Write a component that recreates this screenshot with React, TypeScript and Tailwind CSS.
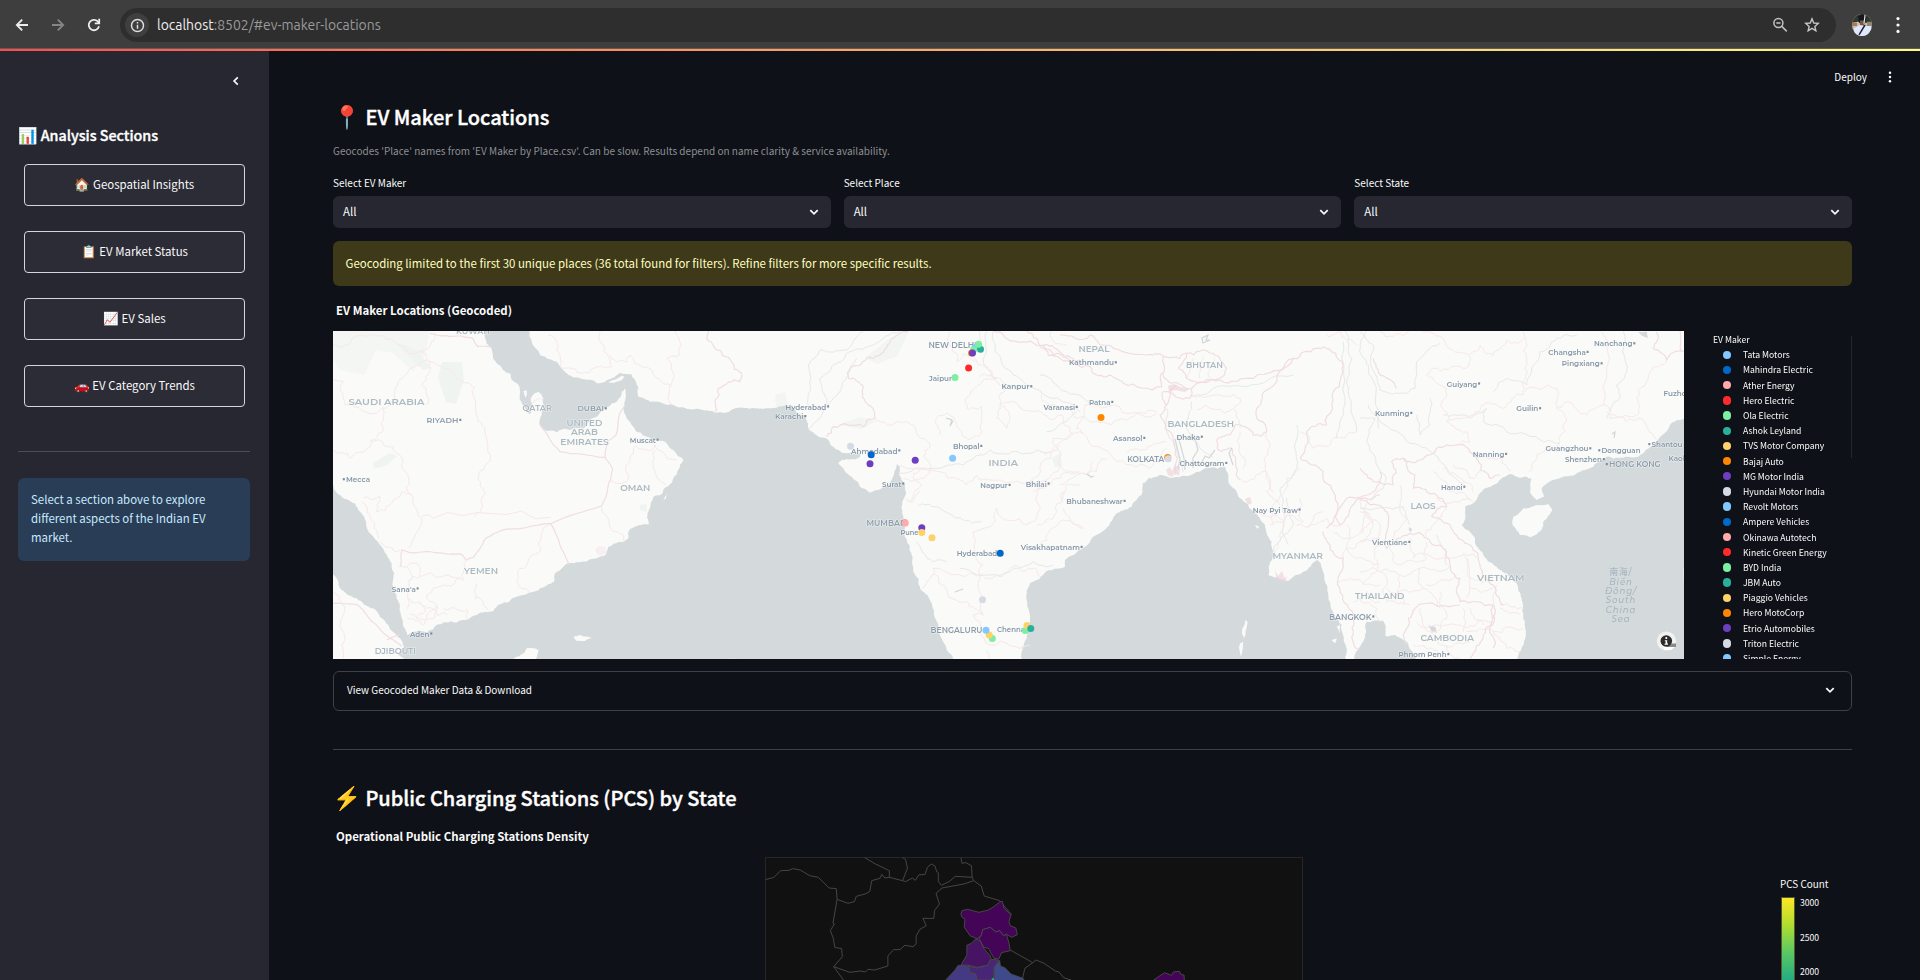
import React from "react";

type Pt = [number, number];

/* Deterministic noise so that borders look surveyed rather than ruled. */
function makeRandom(seed: number) {
  let s = seed * 9301 + 49297;
  return () => {
    s = (s * 9301 + 49297) % 233280;
    return s / 233280 - 0.5;
  };
}

function parse(points: string): Pt[] {
  const n = points.trim().split(/[\s,]+/).map(Number);
  const out: Pt[] = [];
  for (let i = 0; i + 1 < n.length; i += 2) out.push([n[i], n[i + 1]]);
  return out;
}

function rough(points: string, amp: number, seed: number, close = false) {
  const rnd = makeRandom(seed);
  let pts = parse(points);
  if (close) pts = [...pts, pts[0]];
  for (let pass = 0; pass < 3; pass++) {
    const next: Pt[] = [pts[0]];
    for (let i = 1; i < pts.length; i++) {
      const [ax, ay] = pts[i - 1];
      const [bx, by] = pts[i];
      const len = Math.hypot(bx - ax, by - ay);
      if (len > 9) {
        const k = Math.min(len, 55) * amp * rnd();
        next.push([(ax + bx) / 2 - ((by - ay) / len) * k, (ay + by) / 2 + ((bx - ax) / len) * k]);
      }
      next.push([bx, by]);
    }
    pts = next;
  }
  return "M" + pts.map(([x, y]) => `${x.toFixed(1)} ${y.toFixed(1)}`).join("L") + (close ? "Z" : "");
}

interface Sector {
  dx: number;
  water: string[];
  land: string[];
  borders: string[];
  provinces: string[];
  rivers: string[];
}

const sectors: Sector[] = [
  {
    dx: 0,
    water: [
      "0 470 9 480 40 520 75 535 95 565 110 605 130 635 150 660 170 690 185 715 193 745 190 790 205 830 215 880 232 930 290 922 320 900 345 892 415 883 440 870 490 858 510 838 560 815 605 802 640 787 672 770 675 745 700 725 740 712 800 700 828 688 835 665 880 650 895 640 900 612 930 600 957 597 955 560 970 515 990 510 1003 490 1030 460 1060 405 1030 375 1010 355 985 345 950 335 915 315 890 280 880 250 885 190 875 200 860 230 835 245 800 275 760 310 700 312 680 322 650 318 628 298 635 270 640 220 625 200 605 215 598 268 570 225 568 185 540 145 500 115 480 65 463 10 600 10 605 50 630 90 680 110 700 135 750 160 800 175 845 160 870 143 905 148 915 165 925 215 960 230 1030 240 1145 262 1145 1010 610 1010 625 975 590 970 540 1010 232 1010 205 990 222 965 210 940 175 900 130 850 80 820 35 795 0 735",
    ],
    land: ["730 935 750 930 785 938 765 948 740 948", "832 172 875 152 884 156 850 174", "580 198 590 196 588 218", "1000 525 1012 505 1008 520"],
    borders: ["300 25 395 33 428 40 443 65 480 65", "630 300 690 380 825 397 848 433 815 542 662 596 512 617 465 642 430 697 408 706 395 688 320 683 240 683 215 675 212 725", "662 596 717 718", "10 835 80 838 110 870 180 940 215 965", "825 397 832 350 858 330 865 280 885 240", "170 945 210 930"],
    provinces: ["10 60 60 55 125 30 210 60 265 80 300 110 380 160 435 187 445 290 465 320 460 435 450 480 466 505 434 575", "265 80 300 60 312 22", "10 165 40 170 45 240 150 255 195 200 240 130 300 110 275 180 290 240", "158 245 160 310 125 345 60 400 10 375", "120 345 190 365 215 420 245 510 275 580 235 670", "275 572 310 580 662 577", "662 596 635 640 630 680 570 730 565 780 598 802", "100 520 150 515 140 560 180 540 215 500 245 510", "95 530 130 590 145 640", "205 725 265 720 270 755 400 765 405 710", "230 725 232 850", "232 770 270 755", "232 820 265 830 305 850 350 870", "240 865 290 880 320 840 290 810 340 780 390 755", "440 775 435 820 475 855", "232 880 280 900 310 880 320 840", "270 830 285 860 260 880", "415 883 412 855 340 850", "815 542 882 650", "920 360 895 465 840 468", "920 365 950 375 975 360 1040 405", "975 375 970 430 1005 480", "1040 10 1048 90 1010 100 1025 240", "655 30 690 90 690 125 760 145 800 125 845 125 835 95 810 18", "840 90 890 110 900 90 980 160 1025 185", "640 225 605 235", "150 650 210 675", "10 800 45 845 40 1000"],
    rivers: [],
  },
  {
    dx: 1110,
    water: [
      "-5 255 45 264 100 252 165 250 215 250 270 245 315 270 328 315 350 330 385 345 400 365 440 385 470 388 485 378 480 395 440 402 415 412 430 430 455 455 480 485 510 503 545 490 570 475 583 440 590 418 600 425 598 450 615 480 612 520 605 545 610 590 618 640 635 690 640 740 660 790 690 825 705 880 715 920 740 975 764 1010 -5 1010",
      "968 1010 968 970 985 910 990 880 985 850 980 800 990 775 1025 762 1045 738 1095 725 1100 700 1145 678 1145 1010",
    ],
    land: [],
    borders: ["25 18 45 70 95 110 125 145 120 170 55 190 45 262", "625 20 570 50 540 90 500 100 450 130 445 160 490 185 495 230 525 280 490 305 400 305 380 335", "880 18 950 50 1030 60 1060 90 1140 125", "980 18 1020 60 1085 85 1140 105"],
    provinces: ["525 285 600 290 650 325 690 360 675 400 690 435 600 420", "690 435 640 445 665 480 625 530", "690 435 800 480 830 450 870 465 1000 460 1060 370 1120 325", "1000 470 1010 580 980 600 890 550 885 590 820 620 850 720", "690 435 670 460 610 460", "850 745 700 730 690 760 665 790", "845 720 850 870 820 870 870 960 990 960", "850 755 900 755 940 725 1000 730 1030 765", "715 330 710 280 740 265 770 300 800 340 840 330 845 245 800 250 810 210 890 160 835 120 838 18", "830 110 790 85 770 110 750 20", "840 155 900 160 900 240 890 280 920 310 925 260 900 235", "900 235 1000 260 1085 270 1115 325", "1055 20 1060 50 1100 60", "1095 500 1060 580 1010 600", "1000 500 1080 460 1140 440", "850 870 800 830 700 745", "860 975 870 1000", "1090 530 1100 480 1140 480", "960 970 970 960", "615 520 640 530 660 500"],
    rivers: ["600 20 520 60 450 80 400 120 360 160 380 220 370 260 330 310", "490 20 440 75 360 75 325 120 330 200 325 240", "880 20 885 80 940 150 1000 190 1140 260", "860 20 850 100 900 180", "655 540 700 545 790 585 845 590", "600 445 690 430 790 420 870 375 980 385 1050 380", "650 650 700 710 740 710", "780 730 860 750 930 740 1000 710 1060 720", "470 100 420 200 385 240"],
  },
  {
    dx: 2130,
    water: [
      "-5 772 20 738 75 728 75 705 130 668 180 625 225 570 275 545 305 510 308 475 325 460 360 450 385 457 430 452 480 440 510 428 555 425 565 450 570 480 600 520 640 560 675 600 695 650 700 690 685 750 740 768 790 740 830 705 850 740 860 780 865 820 880 870 905 900 912 950 915 1010 -5 1010",
      "943 1010 960 965 975 930 978 895 1000 888 1030 888 1030 1010",
    ],
    land: ["615 885 623 890 612 940 605 925", "600 955 610 950 603 995", "875 945 890 940 885 955", "645 600 658 605 652 612", "890 905 900 900 900 925"],
    borders: ["0 65 60 100 150 125 200 155 250 175 365 185 370 95 320 90 220 70 150 30 60 30", "370 145 395 175 455 190 450 220 370 200 380 240 360 270 400 350 405 450", "415 130 440 85 520 85 560 130 540 160 440 160 415 130", "370 95 420 100 440 85", "455 190 540 165 640 160 760 100", "530 350 570 330 585 300 640 330 680 320 650 250 690 190 760 100 830 70 850 65 910 120 880 200 860 300", "530 350 545 380 575 370 590 430 600 465", "860 300 800 320 780 400 850 440 880 500 900 600 960 520 1020 510", "850 620 870 660 910 700 900 790 940 870 940 920 960 980", "860 610 920 520 1000 500 1020 440", "380 240 410 180"],
    provinces: ["0 200 30 240 110 280 170 290 260 285 350 260", "130 325 110 310 135 240 220 240 350 265", "130 325 220 400 330 430 380 370", "130 325 40 340 60 400 0 470", "260 380 310 375 380 350", "60 480 170 440 200 400", "70 550 130 610 60 590 0 660", "60 420 140 450 160 410", "450 215 520 210 600 220 580 250 470 255", "580 250 600 310", "680 320 675 430 680 500 720 540", "780 320 820 370 880 340 950 320", "600 460 680 440 700 500", "690 600 740 570 790 590 780 520", "640 560 720 580 720 650", "710 650 700 700", "780 430 740 460 700 600", "910 700 960 650 1020 640", "920 600 950 700 1020 720", "930 760 1020 780", "940 830 980 800 1020 830", "890 770 930 760", "800 610 850 560", "960 520 970 620 920 640 880 620", "980 520 1000 600 960 650", "770 600 860 580 900 600", "860 30 900 20 950 60", "440 160 460 100", "480 160 490 95", "510 160 525 100", "0 380 60 360", "600 320 610 430"],
    rivers: ["455 215 520 190 620 185 760 150", "380 250 385 330 410 380 430 440", "455 230 440 310 480 370 520 400", "915 18 935 100 925 200 950 320", "980 120 960 60 980 18", "985 120 1015 310", "770 300 770 430 720 490 730 600 745 660", "20 320 110 260", "910 50 915 240 890 340", "0 150 80 200 180 240", "690 690 760 600 740 520"],
  },
  {
    dx: 3090,
    water: [
      "-18 1010 0 965 18 935 20 890 62 888 65 930 105 930 140 950 172 1010",
      "475 1010 490 960 497 915 490 870 485 820 470 775 440 745 410 725 370 690 345 655 345 640 305 600 315 545 345 530 365 500 400 480 450 447 480 458 515 460 510 500 530 525 552 515 545 490 558 478 600 460 650 445 700 425 740 395 780 398 850 385 880 355 930 300 976 282 976 1010",
      "205 900 225 905 232 925 215 920",
      "835 20 860 20 862 40",
      "146 606 156 612 150 622",
    ],
    land: ["460 575 490 550 540 540 565 537 577 555 550 590 545 615 510 637 480 630 458 600"],
    borders: ["0 430 60 470 100 480 95 410 130 400 150 410 210 390 230 370 290 360 350 400 360 435 390 460 420 450", "130 400 165 450 160 490 230 510 260 545 215 575 280 620 330 660 360 720 400 780 430 840", "0 520 50 540 80 560 80 670 150 625 200 640 250 670 270 720 300 760 300 830 400 840 400 880", "165 850 300 840", "165 850 145 880 140 960", "400 870 370 930 330 1000", "400 840 400 970", "40 100 80 160 110 190", "960 18 970 80 920 105 880 70 890 20"],
    provinces: ["60 20 140 25 200 20 255 50 330 95 310 130 220 130 200 150 260 190 240 240 260 290", "330 90 360 60 400 90 440 45 490 40", "490 20 495 130 490 210 430 250 370 240 340 270 260 290", "495 200 590 190 590 250 640 240 680 270 730 240 725 20", "590 250 620 280 600 350 550 380 510 440", "730 240 750 280 800 290 850 285 880 330 890 345", "740 260 830 270 830 220 870 140 920 105", "260 290 320 320 330 350 290 360", "350 400 420 400 450 440", "250 430 300 460 340 500", "220 440 270 500 340 530", "280 420 330 460 360 440", "60 660 50 740 10 780", "90 670 120 720 200 700 200 650", "150 640 160 700 260 700", "260 700 330 690 350 700", "60 740 120 750 180 730 270 720", "60 740 80 830 150 840", "120 750 130 840", "180 730 190 790 240 850", "80 790 190 790", "200 780 290 750", "310 690 330 760 400 780", "320 700 320 820", "330 790 400 790", "180 850 210 920 260 880 250 850", "170 890 290 900 400 890", "210 920 240 960 330 950", "310 850 310 920", "320 920 400 920 490 910", "260 960 300 1000", "330 850 370 900", "420 850 480 870", "400 920 440 970 480 980", "160 960 200 970 250 1000", "20 560 60 620 60 660", "200 640 220 600 260 545", "120 480 140 580 100 640", "410 780 400 840", "420 840 490 850", "0 820 50 850 60 890", "0 740 60 740", "0 560 40 590 0 620", "230 520 290 530 330 525", "240 800 250 850"],
    rivers: ["240 55 170 110 165 190 115 205 60 195 35 130 40 60 0 20", "25 240 60 290 150 355 200 370 260 430 310 475", "0 280 45 280 20 350 75 450 70 490 30 530", "210 220 210 300 180 330 170 270", "250 270 330 280 380 250 370 290 440 320 550 350 600 355", "400 200 440 160 500 180 540 80 590 40 650 30", "790 20 800 140 770 180 780 220 740 280", "230 630 260 680 260 720", "0 550 130 545 150 600"],
  },
];

type Label = [string, number, number, number, number, "country" | "city" | "metro", string?];

/* text, left, baseline, width, font size, kind, side of the town marker */
const labels: Label[] = [
  ["KUWAIT", 456, 334, 35, 7.6, "country"],
  ["SAUDI ARABIA", 348.5, 405, 76, 9, "country"],
  ["RIYADH", 426.5, 423, 32, 8, "metro", "r"],
  ["QATAR", 522.5, 411.4, 29.5, 8.4, "country"],
  ["DUBAI", 577.5, 411.4, 26.5, 8, "metro", "r"],
  ["UNITED", 566.5, 426, 36, 8.6, "country"],
  ["ARAB", 571, 435.4, 27, 8.6, "country"],
  ["EMIRATES", 560.3, 444.8, 48.5, 8.6, "country"],
  ["Muscat", 629.8, 442.8, 26, 8, "city", "r"],
  ["Mecca", 346, 482.3, 24, 8, "city", "l"],
  ["OMAN", 620.3, 491, 30, 8.6, "country"],
  ["YEMEN", 464, 573.8, 34, 8.8, "country"],
  ["Sana'a", 391.8, 591.5, 24, 8, "city", "r"],
  ["Aden", 410, 636.6, 19.5, 8, "city", "r"],
  ["DJIBOUTI", 374.8, 653.7, 41, 8.2, "country"],
  ["NEW DELHI", 928.5, 347.6, 48, 8.2, "metro"],
  ["Jaipur", 929, 380.6, 23, 8, "city"],
  ["Kanpur", 1001.5, 389.4, 28, 8, "city", "r"],
  ["Hyderabad", 785.3, 409.5, 41, 8, "city", "r"],
  ["Karachi", 775, 419.2, 28.5, 8, "city", "r"],
  ["Varanasi", 1043.5, 410, 31.5, 8, "city", "r"],
  ["Bhopal", 953, 449, 26.5, 8, "city", "r"],
  ["Ahmedabad", 851, 453.5, 46.5, 8, "city", "r"],
  ["INDIA", 988.5, 466, 29.5, 9.4, "country"],
  ["Surat", 882, 486.6, 19.5, 8, "city", "r"],
  ["Nagpur", 980.3, 488, 27.5, 8, "city", "r"],
  ["Bhilai", 1025.8, 486.6, 21, 8, "city", "r"],
  ["MUMBAI", 866.5, 525.5, 36, 8.2, "metro"],
  ["Pune", 900.5, 535, 18, 8, "city"],
  ["Hyderabad", 956.7, 556.2, 40.5, 8, "city"],
  ["Visakhapatnam", 1020.8, 550, 59, 8, "city", "r"],
  ["BENGALURU", 930.5, 633.2, 52, 8.2, "metro"],
  ["Chennai", 997, 631.5, 30, 8, "city"],
  ["NEPAL", 1078.5, 352, 31, 8.8, "country"],
  ["Kathmandu", 1069, 365.4, 45, 8, "city", "r"],
  ["BHUTAN", 1186, 368, 37, 8.6, "country"],
  ["Patna", 1089, 405, 21.5, 8, "city", "r"],
  ["BANGLADESH", 1167.5, 426.6, 66.5, 9, "country"],
  ["Asansol", 1113, 441, 29.5, 8, "city", "r"],
  ["Dhaka", 1176.5, 439.8, 23.5, 8, "city", "r"],
  ["KOLKATA", 1127.3, 461.8, 37, 8.2, "metro"],
  ["Chattogram", 1179.5, 466, 45, 8, "city", "r"],
  ["Bhubaneshwar", 1066.3, 504, 56.5, 8, "city", "r"],
  ["Nay Pyi Taw", 1252.8, 512.6, 45, 8, "city", "r"],
  ["MYANMAR", 1272.5, 559, 50.5, 9, "country"],
  ["BANGKOK", 1329, 619.6, 42.5, 8.2, "metro", "r"],
  ["THAILAND", 1355, 599, 49.5, 9, "country"],
  ["Nanchang", 1594, 346.4, 38.5, 8, "city", "r"],
  ["Changsha", 1548.3, 355, 37.5, 8, "city", "r"],
  ["Pingxiang", 1561.8, 366.4, 38, 8, "city", "r"],
  ["Guiyang", 1446.8, 386.6, 30.5, 8, "city", "r"],
  ["Kunming", 1375, 416, 34.5, 8, "city", "r"],
  ["Guilin", 1516.3, 411.3, 22, 8, "city", "r"],
  ["Fuzhou", 1663.5, 396.4, 28, 8, "city"],
  ["Nanning", 1472.8, 457, 31.5, 8, "city", "r"],
  ["Guangzhou", 1545.5, 451.4, 43, 8, "city", "r"],
  ["Dongguan", 1601.5, 453.4, 39, 8, "city", "l"],
  ["Shenzhen", 1565, 462.2, 37, 8, "city", "r"],
  ["HONG KONG", 1609, 467.2, 51.5, 8.4, "metro", "l"],
  ["Shantou", 1651.5, 447.2, 31, 8, "city", "l"],
  ["Kaohsiung", 1668.5, 461, 40, 8, "city"],
  ["Hanoi", 1441, 489.8, 21.5, 8, "city", "r"],
  ["LAOS", 1410.5, 508.6, 25, 8.8, "country"],
  ["Vientiane", 1372, 545, 35.5, 8, "city", "r"],
  ["VIETNAM", 1477, 581, 47.5, 9, "country"],
  ["CAMBODIA", 1420.5, 640.8, 53.5, 8.8, "country"],
  ["Phnom Penh", 1398.5, 657.2, 48, 8, "city", "r"],
];

const palette = {
  sky: "#83c9ff",
  blue: "#0068c9",
  pink: "#ffabab",
  red: "#ff2b2b",
  green: "#7defa1",
  teal: "#29b09d",
  yellow: "#ffd16a",
  orange: "#ff8700",
  purple: "#6d3fc0",
  grey: "#d5dae5",
};

const dots: [number, number, string][] = [
  [975, 347.5, palette.sky],
  [973.5, 350, palette.green],
  [971.5, 353, palette.orange],
  [980.5, 349.3, palette.teal],
  [978.6, 344.2, palette.green],
  [972.5, 353, palette.purple],
  [968.6, 368, palette.red],
  [955, 377.6, palette.green],
  [850.5, 446.3, palette.grey],
  [871.2, 454.8, palette.blue],
  [870, 463.8, palette.purple],
  [915.2, 460.2, palette.purple],
  [952.6, 458.2, palette.sky],
  [904.7, 522.8, "#b98aa8"],
  [905.2, 523, palette.pink],
  [921.8, 527.8, palette.purple],
  [921.8, 532.5, palette.yellow],
  [932, 537.8, palette.yellow],
  [1000.2, 553.2, palette.blue],
  [982.5, 599.8, palette.grey],
  [992.3, 638.5, palette.green],
  [989.2, 635, palette.yellow],
  [986, 630.2, palette.sky],
  [1025.3, 630.4, palette.green],
  [1027, 625.4, palette.yellow],
  [1030.8, 628.5, palette.teal],
  [1101, 417.5, palette.orange],
  [1167.7, 457.5, palette.orange],
  [1168.2, 458.8, palette.grey],
];

function MakerMap() {
  return (
    <svg className="block h-[328px] w-[1351px] shrink-0" viewBox="333 331 1351 328">
      <rect x="333" y="331" width="1351" height="328" fill="#fafaf8" />
      <g fill="#eef3ee" opacity="0.8">
        <path d="M333 331h96l-3 22-13 18-20-18-17-3-12 25-24-5-7-12z" opacity="0.6" />
        <path d="M442 362h20l2 18-8 24-10-2-8-24z" />
        <path d="M373 463l17-10 7 3-10 9-13 4z" />
        <path d="M395 342l22 8 14 18-8 2-18-16z" />
        <path d="M865 358l25-20 19-7-12 25-20 8zM838 425l22-8 16 4-14 8zM775 395l10-3 3 12-12 4z" opacity="0.8" />
        <path d="M1052 458l8-5 2 12-7 3zM640 505l6-1 1 8-7-2z" />
      </g>
      {sectors.map((s) => (
        <g key={s.dx} transform={`translate(${330 + s.dx / 3} 325) scale(0.33333)`}>
          {s.water.map((p, i) => (
            <path key={i} d={rough(p, 0.26, i + 3, true)} fill="#d4dadc" />
          ))}
          {s.land.map((p, i) => (
            <path key={i} d={rough(p, 0.2, i + 5, true)} fill="#fafaf8" />
          ))}
          <g fill="none" strokeLinejoin="round">
            {s.rivers.map((p, i) => (
              <path key={i} d={rough(p, 0.3, i + 11)} stroke="#e2e5e7" strokeWidth="2.6" />
            ))}
            {s.provinces.map((p, i) => (
              <path key={i} d={rough(p, 0.5, i + 17)} stroke="#f5e6e8" strokeWidth="2.8" />
            ))}
            {s.borders.map((p, i) => (
              <path key={i} d={rough(p, s.dx === 0 ? 0.12 : 0.42, i + 29)} stroke="#f1dce0" strokeWidth="3.4" />
            ))}
          </g>
        </g>
      ))}
      <g fill="#ecd3d8" opacity="0.65">
        <path d="M1166 470l4-3 2 4 3-6 5 2-1 9-4-3-3 4-4-2zM1168 386l6-2 6 3 9 2-4 3-10-2-6 2zM1245 499l5-2 2 6-4 2zM1275 570l3 6 4-5 3 8 2-4-1 7-9-1zM377 562l5 2-3 1z" />
        <path d="M595 549l4-3 6 1 2 6-7 3-4-3z" fill="#f7ecec" />
      </g>
      <path d="M1202 338l6-3-2 5 4 0-7 3zM946 418l6 2-2 6 3-5M1087 474l4 3 3-1M955 592l8-3M1612 434l3-2-1 6" fill="none" stroke="#cfd6d9" strokeWidth="1.2" />
      <path d="M1178 469l2-10-5-20M1185 470l-1-12-6-22M1193 468l0-10 5-8-4-15M1200 466l5-10 4 2 6-8M1233 465l-4-12 3-5" fill="none" stroke="#d4dadc" strokeWidth="1.3" />
      <g fontFamily='"Montserrat", "Inter", "Liberation Sans", sans-serif' paintOrder="stroke" stroke="#fafaf8" strokeOpacity="0.6" strokeWidth="1.2" strokeLinejoin="round">
        {labels.map(([text, x, y, w, size, kind, side], i) => (
          <g key={i}>
            <text
              x={x}
              y={y}
              fontSize={size}
              fontWeight={600}
              textLength={w}
              lengthAdjust="spacingAndGlyphs"
              fill={kind === "country" ? "#abb9c2" : kind === "metro" ? "#8b9cac" : "#8496a8"}
              style={{ paintOrder: "stroke" }}
            >
              {text}
            </text>
            {side === "r" && <rect x={x + w + 0.8} y={y - 4.2} width="2" height="2.2" fill="#7b8c9d" stroke="none" />}
            {side === "l" && <rect x={x - 3.2} y={y - 4.2} width="2" height="2.2" fill="#7b8c9d" stroke="none" />}
          </g>
        ))}
      </g>
      <g fontFamily='"Montserrat", "Inter", "Noto Sans CJK SC", sans-serif' fontSize="8.6" fontStyle="italic" fontWeight={500} textAnchor="middle" fill="#a9b5bf" letterSpacing="0.9">
        <text x="1621" y="575" fontStyle="normal">南海/</text>
        <text x="1621" y="584.6">Biển</text>
        <text x="1621" y="594">Đông/</text>
        <text x="1621" y="603.4">South</text>
        <text x="1621" y="612.8">China</text>
        <text x="1621" y="622.2">Sea</text>
      </g>
      {dots.map(([x, y, c], i) => (
        <circle key={i} cx={x} cy={y} r="3.5" fill={c} />
      ))}
      <circle cx="1666.5" cy="641" r="9.6" fill="#f2f2f0" />
      <rect x="1667" y="643.5" width="9" height="3.5" fill="#8a8a8a" />
      <path d="M1664 647l11 0-4 3h-7z" fill="#ffffff" />
      <circle cx="1666.3" cy="641" r="5.8" fill="#2c2c2c" />
      <circle cx="1666.3" cy="638" r="1.1" fill="#ffffff" />
      <path d="M1664.8 640.2h2.4v3.4h.8v1.2h-3.4v-1.2h1v-2.3h-.8z" fill="#ffffff" />
    </svg>
  );
}

const stateLine = "#4a4a4a";

function DensityMap() {
  return (
    <svg className="block h-[123px] w-[538px]" viewBox="765 857 538 123">
      <rect x="765.5" y="857.5" width="537" height="140" fill="#111111" stroke="#262626" />
      <g transform="translate(740 840) scale(0.37628 0.33333)" fill="none" stroke={stateLine} strokeWidth="2.6" strokeLinejoin="round">
        <path d="M68 119L90 112 108 92 130 91 140 86 160 90 185 107 208 112 237 144 256 146 258 178 247 250 251 252 240 272 248 295 252 322 270 326 272 350 249 380 275 420" />
        <path d="M331 53L360 72 397 92V112L385 114 377 103 372 115 350 122 345 154 335 161 309 169 304 185 287 190 258 178" />
        <path d="M432 53L440 58 445 85 432 122 397 112" />
        <path d="M432 122L440 125 458 114 466 121 475 105 492 103 498 82 508 72 518 78 523 95 527 98 527 124 535 136 557 124 572 109 617 112 615 77 600 68 590 70 587 53" />
        <path d="M617 112L621 122 595 132 537 144 521 160 530 192 517 212 515 235H486L495 257 478 268 468 288V312L460 320 438 316 425 329H408L393 348V378L358 390 340 388 333 396 320 393 292 397 249 380" />
        <path d="M621 122L641 138 649 168 690 182 722 224" />
        <path d="M718 330L778 368 757 385 750 420M778 368L787 360 808 370 838 393 848 396 860 413 880 420" />
        <path d="M587 222L590 212 605 208 635 217 660 210 672 202 690 186 697 184 702 205 720 224 715 245 718 257 733 264 737 284 722 292 708 283 700 287 690 272 680 276 665 262 645 269 641 287 630 296 612 288 596 262 598 238 590 232Z" fill="#440458" />
        <path d="M641 287L645 269 665 262 680 276 690 272 700 287 708 283 715 310 718 332 695 338 688 357 675 355 660 325 648 322 635 295Z" fill="#440458" />
        <path d="M626 297L638 302 648 325 665 347 667 358 658 376 630 382 605 375 587 376 603 345V316L615 310Z" fill="#471464" />
        <path d="M580 376L607 378 612 397 627 402 630 422H545L570 392Z" fill="#443a83" />
        <path d="M607 378L630 384 658 376 667 358 687 360 675 385 674 420H630L627 402 612 397Z" fill="#482576" />
        <path d="M676 382L690 361 692 378 705 384 720 402 752 415 756 422H675Z" fill="#3e4a89" />
        <path d="M668 417L673 413 676 420H670Z" fill="#28ae80" stroke="none" />
        <path d="M1097 422L1128 398 1147 406 1152 396 1168 394 1172 404 1180 405 1181 422Z" fill="#440458" />
      </g>
    </svg>
  );
}

const legend: [string, string][] = [
  ["Tata Motors", "bg-[#83c9ff]"],
  ["Mahindra Electric", "bg-[#0068c9]"],
  ["Ather Energy", "bg-[#ffabab]"],
  ["Hero Electric", "bg-[#ff2b2b]"],
  ["Ola Electric", "bg-[#7defa1]"],
  ["Ashok Leyland", "bg-[#29b09d]"],
  ["TVS Motor Company", "bg-[#ffd16a]"],
  ["Bajaj Auto", "bg-[#ff8700]"],
  ["MG Motor India", "bg-[#6d3fc0]"],
  ["Hyundai Motor India", "bg-[#d5dae5]"],
  ["Revolt Motors", "bg-[#83c9ff]"],
  ["Ampere Vehicles", "bg-[#0068c9]"],
  ["Okinawa Autotech", "bg-[#ffabab]"],
  ["Kinetic Green Energy", "bg-[#ff2b2b]"],
  ["BYD India", "bg-[#7defa1]"],
  ["JBM Auto", "bg-[#29b09d]"],
  ["Piaggio Vehicles", "bg-[#ffd16a]"],
  ["Hero MotoCorp", "bg-[#ff8700]"],
  ["Etrio Automobiles", "bg-[#6d3fc0]"],
  ["Triton Electric", "bg-[#d5dae5]"],
  ["Simple Energy", "bg-[#83c9ff]"],
];

function Chevron({ className = "" }: { className?: string }) {
  return (
    <svg className={`h-3 w-3 ${className}`} viewBox="0 0 12 12" fill="none" stroke="#fafafa" strokeWidth="1.7">
      <path d="M2.3 4.2L6 7.9 9.7 4.2" />
    </svg>
  );
}

function Kebab({ className = "", r = 1.45 }: { className?: string; r?: number }) {
  return (
    <svg className={className} viewBox="0 0 4 14" fill="#fafafa">
      <circle cx="2" cy="2" r={r} />
      <circle cx="2" cy="7" r={r} />
      <circle cx="2" cy="12" r={r} />
    </svg>
  );
}

function BrowserBar() {
  return (
    <header className="flex h-[49px] items-center border-b border-[#5c5c5c] bg-[#3e3e3e] pt-[2px] pl-[14px]">
      <svg className="h-4 w-4" viewBox="0 0 16 16" fill="none" stroke="#ededed" strokeWidth="1.8">
        <path d="M14 8H3M8.2 2.6L2.8 8l5.4 5.4" />
      </svg>
      <svg className="ml-5 h-4 w-4" viewBox="0 0 16 16" fill="none" stroke="#858585" strokeWidth="1.8">
        <path d="M2 8h11M7.8 2.6L13.2 8l-5.4 5.4" />
      </svg>
      <svg className="ml-5 h-4 w-4" viewBox="0 0 16 16" fill="none" stroke="#ededed" strokeWidth="1.8">
        <path d="M13 9.3A5.2 5.2 0 1 1 11.7 4.4L13.2 6" />
        <path d="M13.2 1.8V6.3H8.8" />
      </svg>
      <div className="ml-[18px] flex h-[34px] w-[1716px] items-center rounded-full bg-[#2e2e2f] pl-[5px]">
        <span className="flex h-6 w-6 items-center justify-center rounded-full bg-[#3f3f40]">
          <svg className="h-[15px] w-[15px]" viewBox="0 0 15 15" fill="none" stroke="#dedede" strokeWidth="1.5">
            <circle cx="7.5" cy="7.5" r="6" />
            <path d="M7.5 6.8v4M7.5 4v1.4" />
          </svg>
        </span>
        <span className="ml-2 origin-left scale-x-[0.93] font-['Ubuntu','Noto_Sans'] text-[15px] leading-5 whitespace-nowrap text-[#9a9a9a]">
          <span className="text-[#f0f0f0]">localhost</span>:8502/#ev-maker-locations
        </span>
        <svg className="mr-[16px] ml-auto h-4 w-4" viewBox="0 0 16 16" fill="none" stroke="#c2c2c2" strokeWidth="1.5">
          <circle cx="6.4" cy="6" r="4.5" />
          <path d="M9.8 9.4l5 5M4.3 6h4.2" />
        </svg>
        <svg className="mr-[16px] h-4 w-4" viewBox="0 0 16 16" fill="none" stroke="#c6c6c6" strokeWidth="1.4">
          <path d="M8 1.8l1.75 4.2 4.5.4-3.4 3 1 4.4L8 11.4l-3.85 2.4 1-4.4-3.4-3 4.5-.4z" />
        </svg>
      </div>
      <svg className="ml-4 h-[22px] w-5" viewBox="0 0 20 20" preserveAspectRatio="none">
        <defs>
          <clipPath id="avatar">
            <ellipse cx="10" cy="10" rx="10" ry="10" />
          </clipPath>
        </defs>
        <g clipPath="url(#avatar)">
          <rect width="20" height="20" fill="#c9bfae" />
          <path d="M0 0h20v8h-6l-8-1-6 1z" fill="#2d3a2c" />
          <path d="M0 8h5v3H0z" fill="#a9795b" />
          <path d="M15 7h5v4h-5z" fill="#8e8676" />
          <path d="M6 2l5-2 3 4-1 5-6-1z" fill="#16181f" />
          <path d="M8 6h4v4.5H8z" fill="#7b5442" />
          <path d="M2 13l6-3 4 1 7 0 1 9H2z" fill="#dfe8fb" />
          <path d="M13 10L7 19" stroke="#1d2233" strokeWidth="1.5" />
          <path d="M13 1l-1 8" stroke="#e8e8ee" strokeWidth="1.1" />
        </g>
      </svg>
      <Kebab className="ml-[23px] h-[18px] w-[6px]" r={1.25} />
    </header>
  );
}

const navigation = [
  { icon: "🏠", label: "Geospatial Insights" },
  { icon: "📋", label: "EV Market Status" },
  { icon: "📈", label: "EV Sales" },
  { icon: "🚗", label: "EV Category Trends" },
];

function Sidebar() {
  return (
    <aside className="flex w-[269px] shrink-0 flex-col bg-[#262730] pr-[19px] pl-[18px]">
      <div className="flex h-[59px] items-center justify-end pr-[8px]">
        <Chevron className="rotate-90" />
      </div>
      <h2 className="mt-[13px] text-[14.3px] leading-6 font-medium whitespace-nowrap text-white [-webkit-text-stroke:0.35px_#ffffff]">
        <span className="text-[15.6px] leading-none">📊</span> Analysis Sections
      </h2>
      <nav className="mt-[17px] flex flex-col gap-[25px] pr-[5px] pl-[6px]">
        {navigation.map((n) => (
          <button key={n.label} className="h-[42.1px] rounded-[4px] border border-[#d6d6d8] bg-[#2b2c36] pb-[2px] text-[11.45px] leading-5 text-[#fafafa]">
            <span className="text-[12.6px] leading-none">{n.icon}</span> {n.label}
          </button>
        ))}
      </nav>
      <hr className="mt-[44px] border-[#4c4d55]" />
      <p className="mt-[26px] rounded-[6px] bg-[#2a3d56] px-[13px] pt-[12px] pb-[14px] text-[11.45px] leading-[19px] text-[#c7ebff]">
        Select a section above to explore different aspects of the Indian EV market.
      </p>
    </aside>
  );
}

function SectionTitle({ icon, children, className = "" }: { icon: string; children: React.ReactNode; className?: string }) {
  return (
    <h1 className={`text-[20px] leading-[30px] font-medium whitespace-nowrap text-white [-webkit-text-stroke:0.4px_#ffffff] ${className}`}>
      <span className="text-[22.4px] leading-none">{icon}</span> {children}
    </h1>
  );
}

export default function App() {
  return (
    <div className="flex h-[980px] w-[1920px] flex-col overflow-hidden bg-[#0e1117] font-['Source_Sans_Pro','Noto_Sans_CJK_SC','Noto_Color_Emoji',sans-serif] text-[#fafafa]">
      <BrowserBar />
      <div className="h-[2px] shrink-0 bg-linear-to-r from-[#ff4b4b] to-[#fffd80]" />
      <div className="flex min-h-0 flex-1">
        <Sidebar />
        <main className="flex min-w-0 flex-1 flex-col">
          <div className="flex h-[51px] shrink-0 items-center justify-end pt-px pr-[28px]">
            <span className="text-[10px] leading-5">Deploy</span>
            <Kebab className="ml-[21px] h-[12px] w-[4px]" />
          </div>
          <div className="flex flex-col pr-[68px] pl-[64px]">
            <SectionTitle icon="📍" className="h-[30px]">EV Maker Locations</SectionTitle>
            <p className="mt-[9px] text-[10.03px] leading-5 text-[#8d8f93]">
              Geocodes 'Place' names from 'EV Maker by Place.csv'. Can be slow. Results depend on name clarity &amp; service availability.
            </p>
            <div className="mt-[12px] grid grid-cols-3 gap-[13px]">
              {["Select EV Maker", "Select Place", "Select State"].map((label) => (
                <label key={label} className="flex flex-col">
                  <span className="text-[10px] leading-5">{label}</span>
                  <span className="mt-[3px] flex h-8 items-center justify-between rounded-[6px] bg-[#262730] pr-[11px] pl-[10px] text-[11.45px]">
                    All
                    <Chevron />
                  </span>
                </label>
              ))}
            </div>
            <p className="mt-[13px] flex h-[45px] items-center rounded-[6px] bg-[#3e3918] pl-[12.5px] text-[11.45px] text-[#ffffc2]">
              Geocoding limited to the first 30 unique places (36 total found for filters). Refine filters for more specific results.
            </p>
            <h3 className="mt-[14px] pl-[3px] text-[11.45px] leading-5 font-bold">EV Maker Locations (Geocoded)</h3>
            <div className="mt-[11px] flex h-[328px] overflow-hidden">
              <MakerMap />
              <div className="ml-[29px] flex w-[138px] flex-col">
                <div className="pt-[1px] text-[8.65px] leading-[15.2px]">EV Maker</div>
                {legend.map(([name, color]) => (
                  <div key={name} className="flex h-[15.2px] shrink-0 items-center">
                    <span className={`ml-[10px] h-[8.4px] w-[8.4px] rounded-full ${color}`} />
                    <span className="ml-[11.6px] text-[8.65px] leading-[15px] whitespace-nowrap">{name}</span>
                  </div>
                ))}
              </div>
              <div className="mt-[5px] h-[122px] w-px bg-[#24272e]" />
            </div>
            <div className="mt-[12px] flex h-10 items-center justify-between rounded-[6px] border border-[#3e4045] pr-[15px] pb-[3px] pl-[13px] text-[10px]">
              View Geocoded Maker Data &amp; Download
              <Chevron />
            </div>
            <hr className="mt-[38px] border-[#3e4045]" />
            <SectionTitle icon="⚡" className="mt-[33px] h-[30px]">Public Charging Stations (PCS) by State</SectionTitle>
            <h3 className="mt-[13px] pl-[3px] text-[11.45px] leading-5 font-bold">Operational Public Charging Stations Density</h3>
            <div className="mt-[11px] flex h-[124px] items-start">
              <div className="ml-[432px]">
                <DensityMap />
              </div>
              <div className="mt-[19px] ml-[477px] flex flex-col">
                <div className="text-[9.9px] leading-4 whitespace-nowrap">PCS Count</div>
                <div className="mt-[5px] flex">
                  <div className="ml-[1px] h-[240px] w-[14px] border border-[#555a2c] bg-[linear-gradient(to_bottom,#fde725_0px,#addc30_28px,#5ec962_53px,#28ae80_80px,#21918c_110px)]" />
                  <div className="ml-[5px] flex flex-col gap-[19px] text-[8.65px] leading-[15.5px]">
                    <span className="-mt-[2px]">3000</span>
                    <span>2500</span>
                    <span>2000</span>
                  </div>
                </div>
              </div>
            </div>
          </div>
        </main>
      </div>
    </div>
  );
}
